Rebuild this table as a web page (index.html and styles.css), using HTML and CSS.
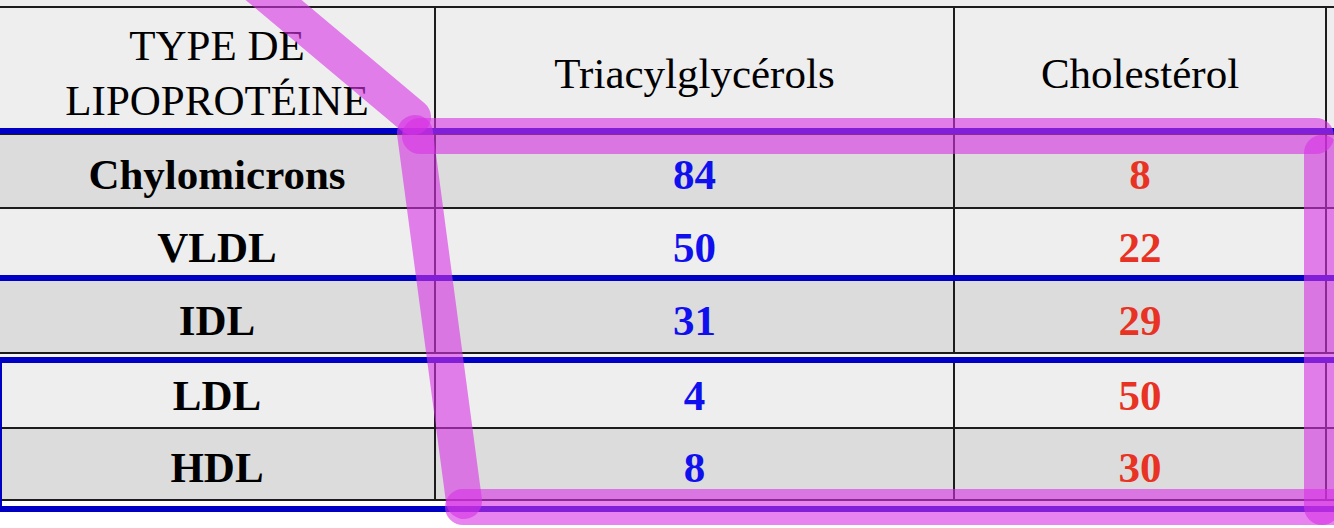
FILE: index.html
```html
<!DOCTYPE html>
<html lang="fr">
<head>
    <meta charset="UTF-8">
    <meta name="viewport" content="width=device-width, initial-scale=1.0">
    <title>Lipoprotéines</title>
    <link rel="stylesheet" href="styles.css">
</head>
<body>
    <div class="sheet">
        <div class="top-gap"></div>
        <div class="rule black"></div>

        <div class="row head">
            <div class="cell"><span class="two-lines">TYPE DE<br>LIPOPROTÉINE</span></div>
            <div class="cell">Triacylglycérols</div>
            <div class="cell">Cholestérol</div>
            <div class="cell"></div>
        </div>
        <div class="rule blue"></div>
        <div class="rule black thin"></div>

        <div class="row shade">
            <div class="cell">Chylomicrons</div>
            <div class="cell tg">84</div>
            <div class="cell chol">8</div>
            <div class="cell"></div>
        </div>
        <div class="rule black"></div>

        <div class="row vldl">
            <div class="cell">VLDL</div>
            <div class="cell tg">50</div>
            <div class="cell chol">22</div>
            <div class="cell"></div>
        </div>
        <div class="rule blue"></div>

        <div class="row shade idl">
            <div class="cell">IDL</div>
            <div class="cell tg">31</div>
            <div class="cell chol">29</div>
            <div class="cell"></div>
        </div>
        <div class="rule black"></div>
        <div class="gap light"></div>
        <div class="rule blue"></div>

        <!-- LDL + HDL boxed in blue -->
        <div class="group">
            <div class="row ldl">
                <div class="cell">LDL</div>
                <div class="cell tg">4</div>
                <div class="cell chol">50</div>
                <div class="cell"></div>
            </div>
            <div class="rule black"></div>
            <div class="row shade hdl">
                <div class="cell">HDL</div>
                <div class="cell tg">8</div>
                <div class="cell chol">30</div>
                <div class="cell"></div>
            </div>
            <div class="rule black"></div>
            <div class="gap white"></div>
        </div>
        <div class="rule blue"></div>

        <!-- highlighter marks drawn over the table -->
        <svg class="marks" width="1334" height="528" viewBox="0 0 1334 528">
            <line x1="245" y1="-24" x2="413" y2="117" />
            <line x1="415" y1="133" x2="464" y2="501" />
            <line x1="420" y1="136" x2="1316" y2="136" />
            <line x1="1322" y1="153" x2="1322" y2="507" />
            <line x1="463" y1="507" x2="1345" y2="507" />
        </svg>
    </div>
</body>
</html>
```

FILE: styles.css
```css
* {
    margin: 0;
    padding: 0;
    box-sizing: border-box;
}

body {
    background-color: #ffffff;
    font-family: 'Liberation Serif', 'Times New Roman', serif;
    color: #000000;
    width: 1334px;
    height: 528px;
    overflow: hidden;
}

.sheet {
    position: relative;
    width: 1334px;
}

.top-gap {
    height: 6px;
    background-color: #eeeeee;
}

.rule {
    height: 2px;
}

.rule.black {
    background-color: #1c1c1c;
}

.rule.thin {
    height: 1px;
}

.rule.blue {
    height: 6px;
    background-color: #0000c4;
}

.gap {
    height: 3px;
}

.gap.light {
    background-color: #f4f4f4;
}

.gap.white {
    height: 5px;
    background-color: #ffffff;
}

.row {
    display: grid;
    grid-template-columns: 436px 519px 372px 1fr;
    height: 72px;
    background-color: #eeeeee;
    font-size: 43px;
    font-weight: bold;
}

.row.shade {
    background-color: #dcdcdc;
}

.cell {
    display: flex;
    align-items: center;
    justify-content: center;
    text-align: center;
    padding-top: 7px;
    border-right: 2px solid #1c1c1c;
}

.cell:last-child {
    border-right: none;
}

.head {
    height: 120px;
    font-weight: normal;
}

.head .cell {
    padding-top: 10px;
}

.two-lines {
    line-height: 55px;
}

.vldl {
    height: 66px;
}

.vldl .cell {
    padding-top: 10px;
}

.idl {
    height: 71px;
}

.ldl {
    height: 64px;
}

.ldl .cell {
    padding-top: 0;
}

.hdl {
    height: 70px;
}

.group .cell:first-child,
.group .rule,
.group .gap {
    box-shadow: inset 2px 0 0 #0000c4;
}

.tg {
    color: #1010ee;
}

.chol {
    color: #e83224;
}

.marks {
    position: absolute;
    top: 0;
    left: 0;
    pointer-events: none;
}

.marks line {
    stroke: rgb(215, 50, 228);
    stroke-opacity: 0.6;
    stroke-width: 36;
    stroke-linecap: round;
}
```
